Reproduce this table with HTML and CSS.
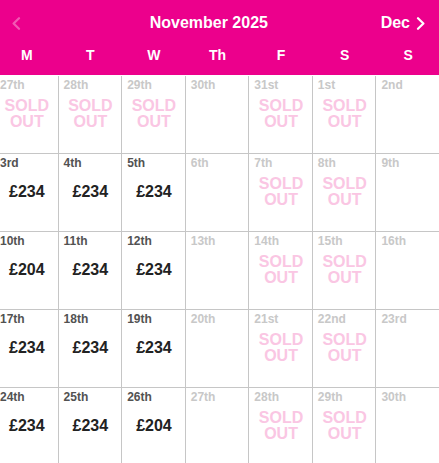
FILE: index.html
```html
<!DOCTYPE html>
<html lang="en">
<head>
<meta charset="utf-8">
<title>November 2025</title>
<link rel="stylesheet" href="styles.css">
</head>
<body>
<div class="calendar">
  <header class="cal-head">
    <div class="nav">
      <button class="nav-btn prev" aria-label="Previous month" disabled>
        <svg width="10" height="13" viewBox="0 0 10 13"><path d="M8 1.2 L2.6 6.5 L8 11.8" fill="none" stroke="currentColor" stroke-width="2.2" stroke-linecap="round" stroke-linejoin="round"/></svg>
      </button>
      <div class="title">November 2025</div>
      <button class="nav-btn next" aria-label="Next month">
        <span>Dec</span>
        <svg width="10" height="13" viewBox="0 0 10 13"><path d="M2 1.2 L7.4 6.5 L2 11.8" fill="none" stroke="currentColor" stroke-width="2.2" stroke-linecap="round" stroke-linejoin="round"/></svg>
      </button>
    </div>
    <div class="weekdays">
      <div>M</div><div>T</div><div>W</div><div>Th</div><div>F</div><div>S</div><div>S</div>
    </div>
  </header>
  <div class="grid">
    <div class="cell"><span class="date off">27th</span><span class="sold">SOLD<br>OUT</span></div>
    <div class="cell"><span class="date off">28th</span><span class="sold">SOLD<br>OUT</span></div>
    <div class="cell"><span class="date off">29th</span><span class="sold">SOLD<br>OUT</span></div>
    <div class="cell"><span class="date off">30th</span></div>
    <div class="cell"><span class="date off">31st</span><span class="sold">SOLD<br>OUT</span></div>
    <div class="cell"><span class="date off">1st</span><span class="sold">SOLD<br>OUT</span></div>
    <div class="cell"><span class="date off">2nd</span></div>

    <div class="cell"><span class="date">3rd</span><span class="price">£234</span></div>
    <div class="cell"><span class="date">4th</span><span class="price">£234</span></div>
    <div class="cell"><span class="date">5th</span><span class="price">£234</span></div>
    <div class="cell"><span class="date off">6th</span></div>
    <div class="cell"><span class="date off">7th</span><span class="sold">SOLD<br>OUT</span></div>
    <div class="cell"><span class="date off">8th</span><span class="sold">SOLD<br>OUT</span></div>
    <div class="cell"><span class="date off">9th</span></div>

    <div class="cell"><span class="date">10th</span><span class="price">£204</span></div>
    <div class="cell"><span class="date">11th</span><span class="price">£234</span></div>
    <div class="cell"><span class="date">12th</span><span class="price">£234</span></div>
    <div class="cell"><span class="date off">13th</span></div>
    <div class="cell"><span class="date off">14th</span><span class="sold">SOLD<br>OUT</span></div>
    <div class="cell"><span class="date off">15th</span><span class="sold">SOLD<br>OUT</span></div>
    <div class="cell"><span class="date off">16th</span></div>

    <div class="cell"><span class="date">17th</span><span class="price">£234</span></div>
    <div class="cell"><span class="date">18th</span><span class="price">£234</span></div>
    <div class="cell"><span class="date">19th</span><span class="price">£234</span></div>
    <div class="cell"><span class="date off">20th</span></div>
    <div class="cell"><span class="date off">21st</span><span class="sold">SOLD<br>OUT</span></div>
    <div class="cell"><span class="date off">22nd</span><span class="sold">SOLD<br>OUT</span></div>
    <div class="cell"><span class="date off">23rd</span></div>

    <div class="cell"><span class="date">24th</span><span class="price">£234</span></div>
    <div class="cell"><span class="date">25th</span><span class="price">£234</span></div>
    <div class="cell"><span class="date">26th</span><span class="price">£204</span></div>
    <div class="cell"><span class="date off">27th</span></div>
    <div class="cell"><span class="date off">28th</span><span class="sold">SOLD<br>OUT</span></div>
    <div class="cell"><span class="date off">29th</span><span class="sold">SOLD<br>OUT</span></div>
    <div class="cell"><span class="date off">30th</span></div>
  </div>
</div>
</body>
</html>
```

FILE: styles.css
```css
html, body {
  margin: 0;
  padding: 0;
  overflow: hidden;
  background: #fff;
}
body {
  font-family: "Liberation Sans", Arial, Helvetica, sans-serif;
  width: 439px;
}
.calendar {
  width: 439px;
  overflow: hidden;
}
.cal-head {
  background: #ec008c;
  color: #fff;
  height: 75px;
}
.nav {
  display: flex;
  align-items: center;
  height: 46px;
}
.nav-btn {
  background: none;
  border: 0;
  padding: 0;
  font: inherit;
  color: #fff;
  display: flex;
  align-items: center;
  cursor: pointer;
}
.nav-btn.prev {
  width: 37px;
  padding-left: 11px;
  box-sizing: border-box;
  color: rgba(255, 255, 255, 0.35);
  cursor: default;
}
.nav-btn.prev svg {
  margin-top: 1px;
}
.nav-btn.next {
  padding-right: 13px;
  font-size: 16px;
  font-weight: bold;
  gap: 6px;
  line-height: 20px;
}
.title {
  flex: 1;
  text-align: center;
  font-size: 16px;
  font-weight: bold;
  line-height: 20px;
}
.weekdays {
  display: grid;
  grid-template-columns: repeat(7, 1fr);
  width: 445px;
  margin-left: -5px;
  padding-top: 1px;
  font-size: 14px;
  font-weight: bold;
  line-height: 16px;
  text-align: center;
}
.grid {
  display: grid;
  grid-template-columns: repeat(7, 1fr);
  grid-auto-rows: 78px;
  width: 445px;
  margin-left: -5px;
  padding-top: 1px;
}
.cell {
  border-right: 1px solid #c6c6c6;
  border-bottom: 1px solid #c6c6c6;
  padding: 2px 4px 0 5px;
  display: flex;
  flex-direction: column;
  min-width: 0;
}
.date {
  font-size: 12px;
  font-weight: bold;
  line-height: 14px;
  color: #525252;
}
.date.off {
  color: #c8c8c8;
}
.sold {
  margin-top: 5.5px;
  align-self: center;
  text-align: center;
  font-size: 16px;
  font-weight: bold;
  line-height: 16.5px;
  color: #fac6e3;
}
.price {
  margin-top: 14px;
  align-self: center;
  font-size: 16px;
  font-weight: bold;
  line-height: 16.5px;
  color: #222;
}
```
